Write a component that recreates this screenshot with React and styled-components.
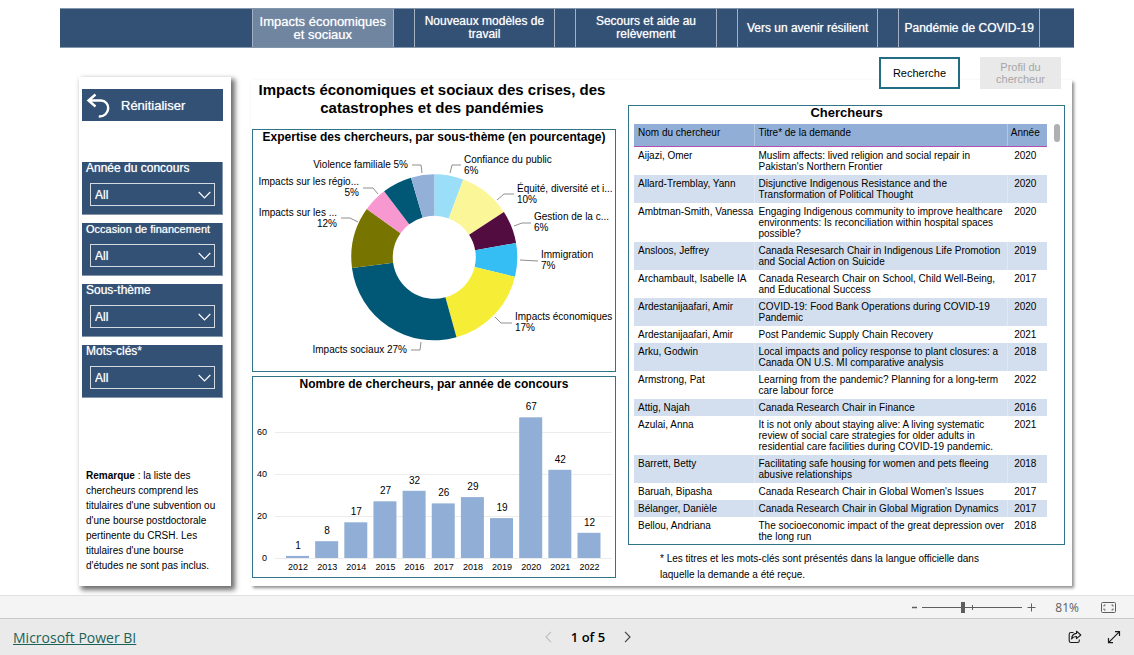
import styled, { createGlobalStyle, css } from 'styled-components';

const GlobalStyle = createGlobalStyle`
  * {
    box-sizing: border-box;
  }

  body {
    margin: 0;
    background: #ffffff;
    color: #000000;
    font-family: 'Liberation Sans', Arial, sans-serif;
  }

  button,
  select {
    font-family: inherit;
  }
`;

const Page = styled.div`
  display: flex;
  flex-direction: column;
  min-height: 100vh;
`;

const Report = styled.main`
  flex: 1;
  padding: 8px 60px 9px;
`;

const lightText = css`
  color: #ffffff;
  text-shadow: 0 0 1px rgba(255, 255, 255, 0.7);
`;

const TopNav = styled.nav`
  display: flex;
  gap: 20px;
  padding: 0 34px 0 192px;
  background: #325175;
  border-top: 1px solid #8496ac;
  border-bottom: 1px solid #8496ac;
`;

const NavButton = styled.button`
  ${lightText}
  flex: 1;
  height: 38px;
  padding: 0 2px;
  border: 1px solid #a3b0c1;
  border-width: 0 1px;
  background: ${({ $active }) => ($active ? '#6f85a0' : '#325175')};
  font-size: ${({ $active }) => ($active ? 13 : 12)}px;
  line-height: 13px;
`;

const Content = styled.div`
  display: flex;
  gap: 20px;
  padding: 29px 2px 0 19px;
`;

const Sidebar = styled.aside`
  flex: 0 0 152px;
  min-width: 0;
  padding: 12px 8px 12px 3px;
  background: #ffffff;
  box-shadow: 3px 3px 5px 1px #6e6e6e;
`;

const ResetButton = styled.button`
  ${lightText}
  display: flex;
  align-items: center;
  gap: 10px;
  width: 100%;
  height: 32px;
  padding: 0 4px;
  border: 0;
  background: #325175;
  font-size: 13px;
`;

const Slicers = styled.div`
  display: grid;
  grid-template-columns: minmax(0, 1fr);
  gap: 8px;
  margin: 41px 0 70px;
`;

const Slicer = styled.label`
  ${lightText}
  display: block;
  height: 53px;
  padding: 0 7px 0 4px;
  border-right: 1px solid #8496ac;
  border-bottom: 1px solid #8496ac;
  background: #325175;
  font-size: ${({ $small }) => ($small ? 11 : 12)}px;
  line-height: 13px;
  white-space: nowrap;
`;

const SelectBox = styled.span`
  display: grid;
  align-items: center;
  margin: 8px 0 0 4px;

  select,
  svg {
    grid-area: 1 / 1;
  }

  svg {
    justify-self: end;
    margin-right: 4px;
    pointer-events: none;
  }
`;

const Select = styled.select`
  ${lightText}
  appearance: none;
  width: 100%;
  height: 23px;
  padding: 0 4px;
  border: 1px solid #d3dae2;
  border-radius: 0;
  background: transparent;
  font-size: 12px;
`;

const Remark = styled.p`
  margin: 0;
  padding: 0 4px;
  font-size: 10px;
  line-height: 15px;
`;

const Panel = styled.section`
  flex: 1;
  min-width: 0;
  display: grid;
  grid-template-columns: minmax(0, 364fr) minmax(0, 437fr);
  gap: 12px;
  align-items: start;
  margin-top: 3px;
  padding: 1px 7px 3px 1px;
  box-shadow: 2px 2px 3px #8c8c8c;
`;

const LeftColumn = styled.div`
  display: grid;
  gap: 4px;
`;

const Title = styled.h1`
  margin: 0 0 8px;
  padding-right: 4px;
  font-size: 15px;
  line-height: 18px;
  text-align: center;
`;

const boxStyle = css`
  border: 1px solid #2f7487;
  background: #ffffff;
`;

const ChartBox = styled.section`
  ${boxStyle}

  svg {
    display: block;
    width: 100%;
    height: auto;
    font-size: 10px;
  }
`;

const BoxTitle = styled.h2`
  margin: 0 0 2px;
  font-size: ${({ $large }) => ($large ? 13 : 12)}px;
  line-height: 14px;
  text-align: center;
`;

const RightColumn = styled.div`
  margin-top: -24px;
`;

const Tabs = styled.div`
  display: flex;
  justify-content: flex-end;
  gap: 20px;
  padding-right: 4px;
  margin-bottom: 16px;
`;

const TabButton = styled.button`
  width: 81px;
  height: 32px;
  padding: 0;
  border: 2px solid #226d83;
  background: #ffffff;
  color: #000000;
  font-size: 11px;
  line-height: 12px;

  &:disabled {
    border-color: #e9e9e9;
    background: #e9e9e9;
    color: #a6a6a6;
  }
`;

const TableBox = styled.section`
  ${boxStyle}
  padding-bottom: 2px;
`;

const TableArea = styled.div`
  display: flex;
  align-items: flex-start;
  gap: 7px;
  padding: 2px 4px 0 5px;
`;

const TableScroll = styled.div`
  flex: 1;
  max-height: 418px;
  overflow-y: auto;
  scrollbar-width: none;
`;

const ScrollThumb = styled.div`
  flex: 0 0 6px;
  height: 18px;
  border-radius: 3px;
  background: #b0b0b0;
`;

const Table = styled.table`
  width: 100%;
  border-collapse: collapse;
  table-layout: fixed;
  font-size: 10px;
  line-height: 11px;

  th,
  td {
    padding: 3px 0 3px 4px;
    font-weight: 400;
    text-align: left;
    vertical-align: top;
  }

  th {
    height: 22px;
    border-bottom: 1px solid #b24fb0;
    background: #91afd6;
  }

  th + th,
  td + td {
    border-left: 1px solid rgba(255, 255, 255, 0.3);
  }

  td:first-child {
    white-space: nowrap;
  }

  th:last-child,
  td:last-child {
    padding: 3px 4px 3px 0;
    text-align: center;
  }

  tbody tr:nth-child(even) {
    background: #d3dfee;
  }
`;

const Footnote = styled.p`
  max-width: 330px;
  margin: 6px 0 0 32px;
  font-size: 10px;
  line-height: 16px;
`;

const ZoomBar = styled.div`
  display: flex;
  align-items: center;
  justify-content: flex-end;
  height: 23px;
  padding-right: 18px;
  border-top: 1px solid #e0e0e0;
  background: #f4f4f4;
  color: #605e5c;
  font-family: 'Open Sans', sans-serif;
  font-size: 12px;
`;

const BarButton = styled.button`
  display: flex;
  align-items: center;
  justify-content: center;
  padding: 0;
  border: 0;
  background: transparent;
  color: inherit;
`;

const ZoomSlider = styled.input`
  appearance: none;
  width: 100px;
  height: 12px;
  margin: 0 5px;
  background:
    linear-gradient(#605e5c, #605e5c) 50px 50% / 1px 5px no-repeat,
    linear-gradient(#605e5c, #605e5c) 0 50% / 100% 1px no-repeat;

  &::-webkit-slider-thumb {
    appearance: none;
    width: 4px;
    height: 11px;
    background: #605e5c;
  }
`;

const ZoomValue = styled.span`
  margin: 0 22px 0 19px;
`;

const Footer = styled.footer`
  display: grid;
  grid-template-columns: 1fr auto 1fr;
  align-items: center;
  height: 37px;
  padding: 0 13px;
  border-top: 1px solid #c8c8c8;
  background: #eaeaea;
  font-family: 'Open Sans', sans-serif;
`;

const BrandLink = styled.a`
  color: #1b6359;
  font-size: 14px;
`;

const Pager = styled.div`
  display: flex;
  align-items: center;
  gap: 19px;
  margin-left: 42px;
  font-size: 13px;
  font-weight: 600;
`;

const FooterActions = styled.div`
  display: flex;
  justify-content: flex-end;
  gap: 25px;
`;

const pages = [
  'Impacts économiques et sociaux',
  'Nouveaux modèles de travail',
  'Secours et aide au relèvement',
  'Vers un avenir résilient',
  'Pandémie de COVID-19',
];

const filters = ['Année du concours', 'Occasion de financement', 'Sous-thème', 'Mots-clés*'];

// start and end are clockwise degrees from the top of the ring
const slices = [
  { start: 0, end: 20.4, color: '#9adef8', lines: ['Confiance du public', '6%'], x: 211, y: 17, leader: '197,27 199,19 208,19' },
  { start: 20.4, end: 57, color: '#fbf697', lines: ['Équité, diversité et i...', '10%'], x: 264, y: 46, leader: '244,54 251,48 261,48' },
  { start: 57, end: 80.1, color: '#520c3f', lines: ['Gestion de la c...', '6%'], x: 281, y: 74, leader: '261,80 269,77 278,77' },
  { start: 80.1, end: 103.6, color: '#34bef3', lines: ['Immigration', '7%'], x: 288, y: 112, leader: '267,114 285,115' },
  { start: 103.6, end: 164.5, color: '#f6ee36', lines: ['Impacts économiques', '17%'], x: 262, y: 174, leader: '242,171 248,177 259,177' },
  { start: 164.5, end: 262.6, color: '#005776', lines: ['Impacts sociaux 27%'], x: 154, y: 207, anchor: 'end', leader: '168,196 167,204 158,204' },
  { start: 262.6, end: 305.5, color: '#777500', lines: ['Impacts sur les ...', '12%'], x: 84, y: 70, anchor: 'end', leader: '88,72 97,72 105,76' },
  { start: 305.5, end: 322.8, color: '#f799d0', lines: ['Impacts sur les régio...', '5%'], x: 106, y: 39, anchor: 'end', leader: '110,42 120,42 125,48' },
  { start: 322.8, end: 343.7, color: '#005776' },
  { start: 343.7, end: 360, color: '#93b0d8', lines: ['Violence familiale 5%'], x: 155, y: 22, anchor: 'end', leader: '159,19 168,19 169,27' },
];

const years = [
  [2012, 1],
  [2013, 8],
  [2014, 17],
  [2015, 27],
  [2016, 32],
  [2017, 26],
  [2018, 29],
  [2019, 19],
  [2020, 67],
  [2021, 42],
  [2022, 12],
];

const researchers = [
  ['Aijazi, Omer', "Muslim affects: lived religion and social repair in Pakistan's Northern Frontier", 2020],
  ['Allard-Tremblay, Yann', 'Disjunctive Indigenous Resistance and the Transformation of Political Thought', 2020],
  ['Ambtman-Smith, Vanessa', 'Engaging Indigenous community to improve healthcare environments: Is reconciliation within hospital spaces possible?', 2020],
  ['Ansloos, Jeffrey', 'Canada Resesarch Chair in Indigenous Life Promotion and Social Action on Suicide', 2019],
  ['Archambault, Isabelle IA', 'Canada Research Chair on School, Child Well-Being, and Educational Success', 2017],
  ['Ardestanijaafari, Amir', 'COVID-19: Food Bank Operations during COVID-19 Pandemic', 2020],
  ['Ardestanijaafari, Amir', 'Post Pandemic Supply Chain Recovery', 2021],
  ['Arku, Godwin', 'Local impacts and policy response to plant closures: a Canada ON U.S. MI comparative analysis', 2018],
  ['Armstrong, Pat', 'Learning from the pandemic? Planning for a long-term care labour force', 2022],
  ['Attig, Najah', 'Canada Research Chair in Finance', 2016],
  ['Azulai, Anna', 'It is not only about staying alive: A living systematic review of social care strategies for older adults in residential care facilities during COVID-19 pandemic.', 2021],
  ['Barrett, Betty', 'Facilitating safe housing for women and pets fleeing abusive relationships', 2018],
  ['Baruah, Bipasha', "Canada Research Chair in Global Women's Issues", 2017],
  ['Bélanger, Danièle', 'Canada Research Chair in Global Migration Dynamics', 2017],
  ['Bellou, Andriana', 'The socioeconomic impact of the great depression over the long run', 2018],
];

const CENTER = [181.3, 111.3];

const point = (radius, degrees) => {
  const angle = (degrees * Math.PI) / 180;
  return `${CENTER[0] + radius * Math.sin(angle)} ${CENTER[1] - radius * Math.cos(angle)}`;
};

const slicePath = ({ start, end }) =>
  `M${point(83, start)} A83 83 0 0 1 ${point(83, end)} L${point(41.5, end)} A41.5 41.5 0 0 0 ${point(41.5, start)}Z`;

const DonutChart = () => (
  <svg viewBox="0 0 362 225" role="img" aria-label="Expertise des chercheurs">
    {slices.map((slice) => (
      <g key={slice.start}>
        <path d={slicePath(slice)} fill={slice.color} />
        {slice.leader && <polyline points={slice.leader} fill="none" stroke="#8f8f8f" />}
        {slice.lines?.map((line, i) => (
          <text key={line} x={slice.x} y={slice.y + i * 11} textAnchor={slice.anchor}>
            {line}
          </text>
        ))}
      </g>
    ))}
  </svg>
);

const BarChart = () => (
  <svg viewBox="0 0 362 184" role="img" aria-label="Nombre de chercheurs">
    {[0, 20, 40, 60].map((tick) => (
      <g key={tick}>
        <line x1="22" x2="359" y1={165.5 - tick * 2.1} y2={165.5 - tick * 2.1} stroke="#ececec" />
        <text x="14" y={168 - tick * 2.1} fontSize="9" textAnchor="end">
          {tick}
        </text>
      </g>
    ))}
    {years.map(([year, count], i) => {
      const x = 33 + i * 29.15;
      const top = 165 - count * 2.1;
      return (
        <g key={year} textAnchor="middle">
          <rect x={x} y={top} width="23" height={count * 2.1} fill="#91afd6" />
          <text x={x + 12} y={top - 7}>
            {count}
          </text>
          <text x={x + 12} y="177" fontSize="9">
            {year}
          </text>
        </g>
      );
    })}
  </svg>
);

const App = () => {
  return (
    <Page>
      <GlobalStyle />
      <Report>
        <TopNav>
          {pages.map((page, i) => (
            <NavButton key={page} $active={i === 0}>
              {page}
            </NavButton>
          ))}
        </TopNav>
        <Content>
          <Sidebar>
            <ResetButton>
              <svg width="25" height="25" viewBox="0 0 25 25" fill="none" stroke="#fff" strokeWidth="2.4">
                <path d="M9.5 1.5 2.5 7.5l7 6M2.5 7.5H15a7.5 7.5 0 0 1 7.2 8.2c-.4 4.4-4 8-9.4 7.8" />
              </svg>
              Rénitialiser
            </ResetButton>
            <Slicers>
              {filters.map((filter) => (
                <Slicer key={filter} $small={filter.length > 20}>
                  {filter}
                  <SelectBox>
                    <Select>
                      <option>All</option>
                    </Select>
                    <svg width="13" height="8" viewBox="0 0 13 8" fill="none" stroke="#fff" strokeWidth="1.2">
                      <path d="m.7 1 5.8 5.8L12.3 1" />
                    </svg>
                  </SelectBox>
                </Slicer>
              ))}
            </Slicers>
            <Remark>
              <b>Remarque</b> : la liste des chercheurs comprend les titulaires d'une subvention ou d'une bourse
              postdoctorale pertinente du CRSH. Les titulaires d'une bourse d'études ne sont pas inclus.
            </Remark>
          </Sidebar>
          <Panel>
            <LeftColumn>
              <Title>Impacts économiques et sociaux des crises, des catastrophes et des pandémies</Title>
              <ChartBox>
                <BoxTitle>Expertise des chercheurs, par sous-thème (en pourcentage)</BoxTitle>
                <DonutChart />
              </ChartBox>
              <ChartBox>
                <BoxTitle>Nombre de chercheurs, par année de concours</BoxTitle>
                <BarChart />
              </ChartBox>
            </LeftColumn>
            <RightColumn>
              <Tabs>
                <TabButton>Recherche</TabButton>
                <TabButton disabled>Profil du chercheur</TabButton>
              </Tabs>
              <TableBox>
                <BoxTitle $large>Chercheurs</BoxTitle>
                <TableArea>
                  <TableScroll>
                    <Table>
                      <colgroup>
                        <col width="120" />
                        <col />
                        <col width="40" />
                      </colgroup>
                      <thead>
                        <tr>
                          <th>Nom du chercheur</th>
                          <th>Titre* de la demande</th>
                          <th>Année</th>
                        </tr>
                      </thead>
                      <tbody>
                        {researchers.map(([name, title, year]) => (
                          <tr key={title}>
                            <td>{name}</td>
                            <td>{title}</td>
                            <td>{year}</td>
                          </tr>
                        ))}
                      </tbody>
                    </Table>
                  </TableScroll>
                  <ScrollThumb />
                </TableArea>
              </TableBox>
              <Footnote>
                * Les titres et les mots-clés sont présentés dans la langue officielle dans laquelle la demande a été
                reçue.
              </Footnote>
            </RightColumn>
          </Panel>
        </Content>
      </Report>
      <ZoomBar>
        <BarButton aria-label="Zoom arrière">
          <svg width="5" height="9" viewBox="0 0 5 9" stroke="currentColor" strokeWidth="1.5">
            <path d="M0 4.5h5" />
          </svg>
        </BarButton>
        <ZoomSlider type="range" min="0" max="200" defaultValue="81" aria-label="Zoom" />
        <BarButton aria-label="Zoom avant">
          <svg width="9" height="9" viewBox="0 0 9 9" stroke="currentColor">
            <path d="M.5 4.5h8M4.5.5v8" />
          </svg>
        </BarButton>
        <ZoomValue>81%</ZoomValue>
        <BarButton aria-label="Ajuster à la page">
          <svg width="15" height="11" viewBox="0 0 15 11" fill="none" stroke="currentColor">
            <rect x=".5" y=".5" width="14" height="10" rx="1" />
            <path d="M3 4.5V3h1.5M10.5 3H12v1.5M12 6.5V8h-1.5M4.5 8H3V6.5" />
          </svg>
        </BarButton>
      </ZoomBar>
      <Footer>
        <div>
          <BrandLink href="#powerbi">Microsoft Power BI</BrandLink>
        </div>
        <Pager>
          <BarButton aria-label="Page précédente" disabled>
            <svg width="7" height="12" viewBox="0 0 7 12" fill="none" stroke="#c0c0c0" strokeWidth="1.2">
              <path d="M6 .8 1 6l5 5.2" />
            </svg>
          </BarButton>
          <span>1 of 5</span>
          <BarButton aria-label="Page suivante">
            <svg width="7" height="12" viewBox="0 0 7 12" fill="none" stroke="#444" strokeWidth="1.2">
              <path d="m1 .8 5 5.2-5 5.2" />
            </svg>
          </BarButton>
        </Pager>
        <FooterActions>
          <BarButton aria-label="Partager">
            <svg width="14" height="14" viewBox="0 0 14 14" fill="none" stroke="#1a1a1a" strokeWidth="1.1">
              <path d="M5.5 2.5H3A1.8 1.8 0 0 0 1.2 4.3v6.4A1.8 1.8 0 0 0 3 12.5h6.5a1.8 1.8 0 0 0 1.8-1.8V9.5" />
              <path d="M8.5 1.2 12.8 5 8.5 8.6V6.5C6.2 6.3 4.8 7.2 3.6 9 3.8 6 5.5 3.7 8.5 3.4Z" strokeLinejoin="round" />
            </svg>
          </BarButton>
          <BarButton aria-label="Plein écran">
            <svg width="14" height="14" viewBox="0 0 14 14" fill="none" stroke="#1a1a1a" strokeWidth="1.2">
              <path d="M8 1.6h4.5V6M12.5 1.6l-11 11M1.5 8v4.6H6" />
            </svg>
          </BarButton>
        </FooterActions>
      </Footer>
    </Page>
  );
};

export default App;
